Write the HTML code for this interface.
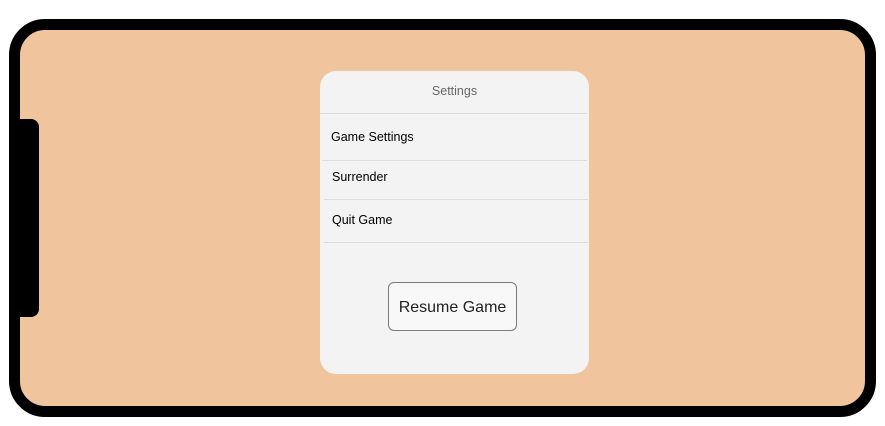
<!DOCTYPE html>
<html><head><style>
body{margin:0;width:885px;height:426px;background:#fff;position:relative;overflow:hidden;font-family:"Liberation Sans",sans-serif}
.frame{position:absolute;left:9px;top:19px;width:845px;height:376px;border:11px solid #000;border-radius:36px;background:#f0c59e}
.notch{position:absolute;left:20px;top:119px;width:19px;height:198px;background:#000;border-radius:0 8px 8px 0}
.panel{position:absolute;left:320px;top:71px;width:269px;height:303px;background:#f3f3f3;border-radius:16px}
.t{position:absolute;font-size:12.5px;color:#000}
.line{position:absolute;height:1px;background:#dcdcdc}
.btn{position:absolute;left:388px;top:282px;width:127px;height:47px;border:1px solid #7a7a7a;border-radius:6px;background:#f8f8f8;font-size:16px;line-height:49px;text-align:center;color:#222}
</style></head><body>
<div class="frame"></div>
<div class="notch"></div>
<div class="panel"></div>
<div class="t" style="left:0;width:909px;text-align:center;top:84px;color:#666">Settings</div>
<div class="line" style="left:320px;width:267px;top:113px"></div>
<div class="t" style="left:331px;top:130px">Game Settings</div>
<div class="line" style="left:322px;width:265px;top:160px"></div>
<div class="t" style="left:332px;top:170px">Surrender</div>
<div class="line" style="left:324px;width:264px;top:199px"></div>
<div class="t" style="left:332px;top:213px">Quit Game</div>
<div class="line" style="left:324px;width:264px;top:242px"></div>
<div class="btn">Resume Game</div>
</body></html>
